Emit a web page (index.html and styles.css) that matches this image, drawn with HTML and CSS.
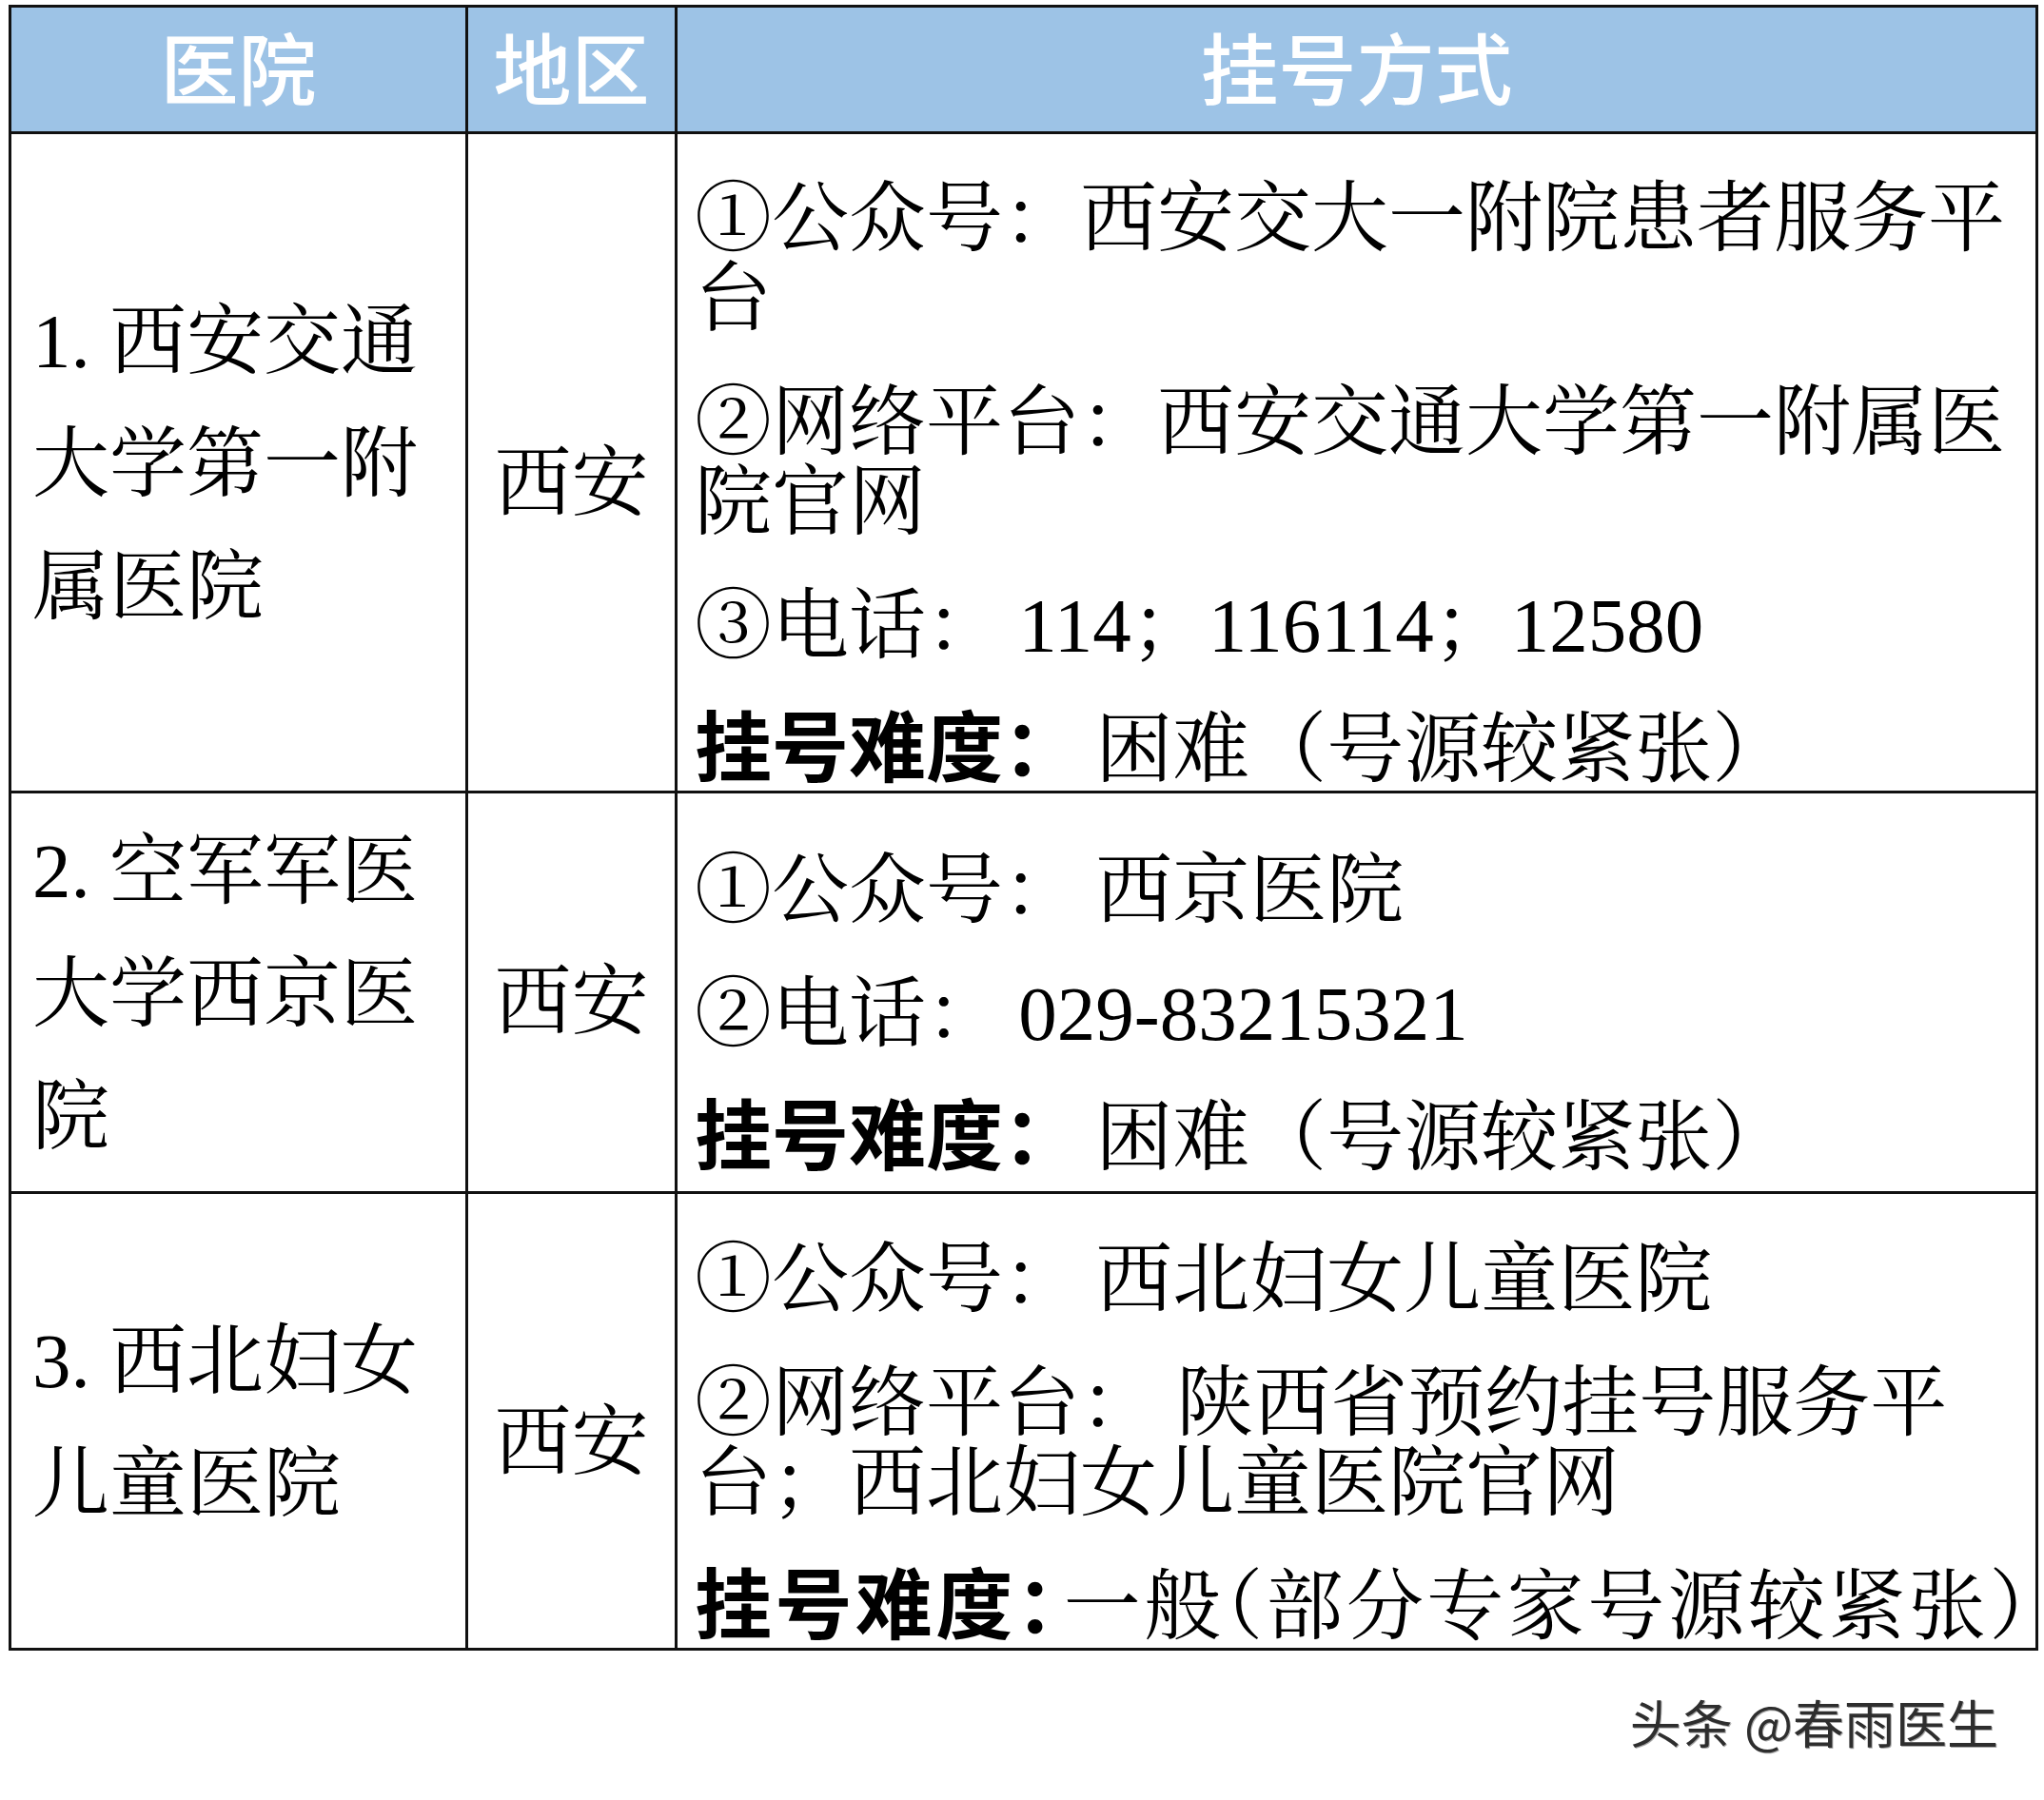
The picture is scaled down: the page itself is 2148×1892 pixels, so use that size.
FILE: index.html
```html
<!DOCTYPE html>
<html lang="zh-CN">
<head>
<meta charset="utf-8">
<title>西安医院挂号方式</title>
<link rel="stylesheet" href="styles.css">
</head>
<body>
<main class="page">
  <table class="reg">
    <colgroup><col class="c-hosp"><col class="c-area"><col class="c-way"></colgroup>
    <thead>
      <tr class="head"><th>医院</th><th>地区</th><th>挂号方式</th></tr>
    </thead>
    <tbody>
      <tr class="r1">
        <td class="hosp">1. 西安交通大学第一附属医院</td>
        <td class="area">西安</td>
        <td class="way">
          <p>①公众号：西安交大一附院患者服务平台</p>
          <p>②网络平台：西安交通大学第一附属医院官网</p>
          <p>③电话：&thinsp;114；116114；12580</p>
          <p><b class="lvl">挂号难度：</b>&thinsp;困难（号源较紧张）</p>
        </td>
      </tr>
      <tr class="r2">
        <td class="hosp">2. 空军军医大学西京医院</td>
        <td class="area">西安</td>
        <td class="way">
          <p>①公众号：&thinsp;西京医院</p>
          <p>②电话：&thinsp;029-83215321</p>
          <p><b class="lvl">挂号难度：</b>&thinsp;困难（号源较紧张）</p>
        </td>
      </tr>
      <tr class="r3">
        <td class="hosp">3. 西北妇女儿童医院</td>
        <td class="area">西安</td>
        <td class="way">
          <p>①公众号：&thinsp;西北妇女儿童医院</p>
          <p>②网络平台： 陕西省预约挂号服务平台；西北妇女儿童医院官网</p>
          <p class="tight"><b class="lvl">挂号难度<span class="halt colon">：</span></b>一般<span class="halt">（</span>部分专家号源较紧张<span class="halt">）</span></p>
        </td>
      </tr>
    </tbody>
  </table>
</main>
<footer class="mark">头条 @春雨医生</footer>
</body>
</html>
```

FILE: styles.css
```css
html, body {
  margin: 0;
  padding: 0;
  background: #ffffff;
}

body {
  width: 2148px;
  height: 1892px;
  overflow: hidden;
}

.page {
  padding: 5px 0 0 9px;
}

.reg {
  border-collapse: collapse;
  table-layout: fixed;
  width: 2130px;
  font-family: "Liberation Serif", "Noto Serif CJK SC", "Noto Sans CJK SC", serif;
  font-size: 81px;
  color: #000;
}

.c-hosp { width: 480px; }
.c-area { width: 220px; }
.c-way { width: 1430px; }

.reg th,
.reg td {
  border: 3px solid #111;
  padding: 0;
}

.head {
  height: 133px;
  background: #9dc3e6;
}

.reg th {
  padding-bottom: 8px;
  color: #ffffff;
  font-family: "Noto Sans CJK SC", sans-serif;
  font-weight: 500;
  font-size: 82px;
  line-height: 1;
  text-align: center;
  vertical-align: middle;
}

.r1 { height: 693px; }
.r2 { height: 421px; }
.r3 { height: 480px; }

.reg td.hosp {
  padding: 4px 10px 0 22px;
  line-height: 129px;
  vertical-align: middle;
}

.reg td.area {
  padding-top: 44px;
  text-align: center;
  vertical-align: middle;
  line-height: 84px;
}

.reg .r2 td.area {
  padding-top: 20px;
}

.reg td.way {
  padding: 0 19px 0 18px;
  vertical-align: middle;
}

.way p {
  margin: 46px 0 0;
  line-height: 84px;
}

.way p.tight {
  margin-right: -19px;
  white-space: nowrap;
  letter-spacing: 3.4px;
}

.lvl {
  font-family: "Noto Sans CJK SC", sans-serif;
  font-weight: 700;
  line-height: 60px;
}

.halt {
  font-feature-settings: "halt";
}

.colon {
  letter-spacing: 0.12em;
}

.mark {
  margin-top: 48px;
  padding-right: 48px;
  text-align: right;
  font-family: "Noto Sans CJK SC", sans-serif;
  font-weight: 400;
  font-size: 54px;
  line-height: 54px;
  color: #2e2e2e;
  text-shadow: 1px 1px 0 rgba(0, 0, 0, 0.35);
}
```
